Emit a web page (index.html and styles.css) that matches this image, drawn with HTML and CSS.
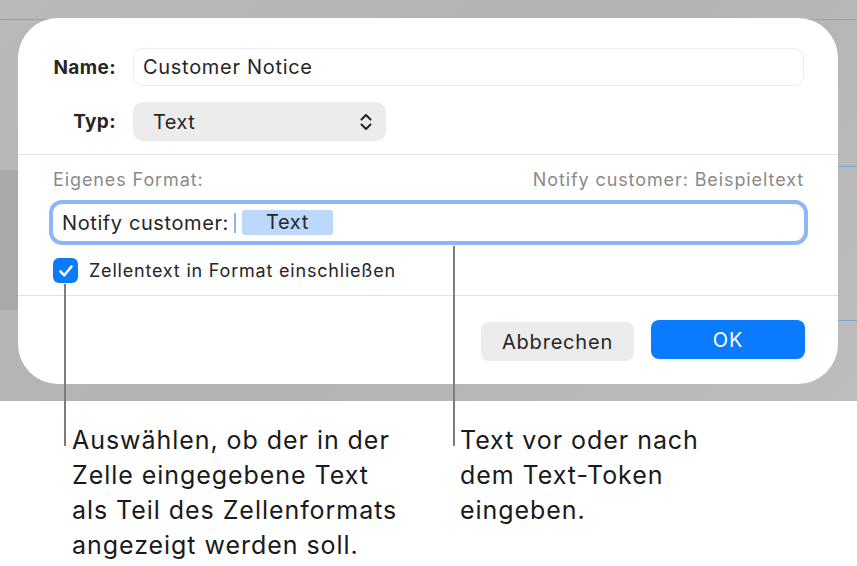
FILE: index.html
```html
<!DOCTYPE html>
<html lang="de">
<head>
<meta charset="utf-8">
<link rel="stylesheet" href="styles.css">
</head>
<body>
<div class="page">
  <div class="stage">
    <div class="deco deco-top-left"></div>
    <div class="deco deco-top-right"></div>
    <div class="deco deco-right-a"></div>
    <div class="deco deco-right-b"></div>
    <div class="deco-band"></div>
    <div class="dialog">
      <div class="section top">
        <div class="row">
          <label class="lbl">Name:</label>
          <div class="input">Customer Notice</div>
        </div>
        <div class="row">
          <label class="lbl">Typ:</label>
          <div class="popup">
            <span>Text</span>
            <svg class="chev" width="14" height="20" viewBox="0 0 14 20"><path d="M2.5 7.5 L7 3 L11.5 7.5 M2.5 12.5 L7 17 L11.5 12.5" fill="none" stroke="#222" stroke-width="2" stroke-linecap="round" stroke-linejoin="round"/></svg>
          </div>
        </div>
      </div>
      <div class="section mid">
        <div class="hint-row">
          <span>Eigenes Format:</span>
          <span>Notify customer: Beispieltext</span>
        </div>
        <div class="format-field">
          <span>Notify customer:</span>
          <span class="caret"></span>
          <span class="token">Text</span>
        </div>
        <div class="check-row">
          <span class="checkbox">
            <svg width="16" height="14" viewBox="0 0 16 14"><path d="M2.5 7.5 L6.3 11.3 L13.5 2.5" fill="none" stroke="#fff" stroke-width="2.6" stroke-linecap="round" stroke-linejoin="round"/></svg>
          </span>
          <span>Zellentext in Format einschließen</span>
        </div>
      </div>
      <div class="section buttons">
        <button class="btn cancel">Abbrechen</button>
        <button class="btn ok">OK</button>
      </div>
    </div>
  </div>
  <div class="callouts">
    <p class="note note-left">Auswählen, ob der in der Zelle eingegebene Text als Teil des Zellenformats angezeigt werden soll.</p>
    <p class="note note-right">Text vor oder nach dem Text-Token eingeben.</p>
  </div>
  <div class="leader leader-left"></div>
  <div class="leader leader-right"></div>
</div>
</body>
</html>
```
FILE: styles.css
```css
* { box-sizing: border-box; }
html, body { margin: 0; padding: 0; background: #fff; }
body { font-family: "Inter", "Liberation Sans", sans-serif; color: #222; }
.page { position: relative; width: 857px; height: 566px; overflow: hidden; }

.stage {
  position: relative;
  height: 401px;
  padding: 18px 19px 0 18px;
  background: linear-gradient(135deg, #b9b9b9 0%, #b3b3b3 50%, #bdbdbd 100%);
}
.deco { position: absolute; height: 1px; background: #7fa6d6; }
.deco-top-left { top: 19px; left: 0; width: 60px; }
.deco-top-right { top: 19px; right: 0; width: 70px; }
.deco-right-a { top: 166px; right: 0; width: 20px; }
.deco-right-b { top: 320px; right: 0; width: 20px; }
.deco-band { position: absolute; left: 0; top: 170px; width: 18px; height: 140px; background: #a9a9a9; }

.dialog {
  position: relative;
  width: 820px;
  height: 366px;
  background: #fff;
  border-radius: 40px;
  display: flex;
  flex-direction: column;
}
.section.top {
  padding: 30px 34px 0 0;
  height: 137px;
  border-bottom: 1px solid #e3e3e3;
  display: flex;
  flex-direction: column;
  gap: 16px;
}
.row { display: flex; align-items: center; }
.lbl {
  width: 98px;
  text-align: right;
  font-weight: 700;
  font-size: 19px;
  letter-spacing: 0.4px;
  color: #262626;
  margin-right: 17px;
}
.input {
  flex: 1;
  height: 38px;
  border: 1px solid #ededed;
  border-radius: 10px;
  padding-left: 9px;
  display: flex;
  align-items: center;
  font-size: 20px;
  letter-spacing: 0.7px;
  color: #262626;
}
.popup {
  width: 253px;
  height: 39px;
  background: #ececec;
  border-radius: 10px;
  padding: 0 13px 0 20px;
  display: flex;
  align-items: center;
  justify-content: space-between;
  font-size: 20px;
  letter-spacing: 0.5px;
  color: #262626;
}
.chev { display: block; }

.section.mid {
  padding: 14px 30px 0 31px;
  height: 141px;
  border-bottom: 1px solid #e3e3e3;
}
.hint-row {
  display: flex;
  justify-content: space-between;
  padding: 0 4px 0 4px;
  font-size: 18px;
  letter-spacing: 0.9px;
  color: #8a8a8a;
  height: 22px;
  line-height: 22px;
}
.format-field {
  margin-top: 9px;
  height: 45px;
  border: 4px solid #8eb6f6;
  border-radius: 13px;
  display: flex;
  align-items: center;
  padding-left: 9px;
  font-size: 20px;
  letter-spacing: 0.6px;
  color: #262626;
}
.caret {
  width: 2px;
  height: 20px;
  background: #8db4f2;
  margin-left: 5px;
  margin-right: 6px;
}
.token {
  width: 91px;
  height: 25px;
  background: #bcd8fb;
  border-radius: 3px;
  text-align: center;
  line-height: 25px;
}
.check-row {
  display: flex;
  align-items: center;
  margin-top: 13px;
  padding-left: 4px;
  font-size: 18px;
  letter-spacing: 0.8px;
  color: #262626;
}
.checkbox {
  width: 25px;
  height: 25px;
  border-radius: 6px;
  background: #0a7aff;
  display: flex;
  align-items: center;
  justify-content: center;
  margin-right: 11px;
}
.checkbox svg { display: block; }

.section.buttons {
  display: flex;
  justify-content: flex-end;
  align-items: flex-start;
  gap: 17px;
  padding: 24px 33px 0 0;
}
.btn {
  font-family: inherit;
  border: 0;
  width: 154px;
  height: 39px;
  border-radius: 8px;
  font-size: 20px;
  letter-spacing: 0.8px;
}
.btn.cancel { background: #ececec; color: #262626; margin-top: 2px; width: 153px; }
.btn.ok { background: #0a7bff; color: #fff; }

.callouts {
  position: relative;
  display: flex;
  padding: 22px 0 0 72px;
}
.note {
  margin: 0;
  font-size: 25px;
  letter-spacing: 0.95px;
  line-height: 35px;
  color: #1a1a1a;
}
.note-left { width: 335px; }
.note-right { width: 280px; margin-left: 53px; }

.leader { position: absolute; width: 2px; background: #7c7c7c; }
.leader-left { left: 64px; top: 284px; height: 162px; }
.leader-right { left: 453px; top: 246px; height: 200px; }
```
